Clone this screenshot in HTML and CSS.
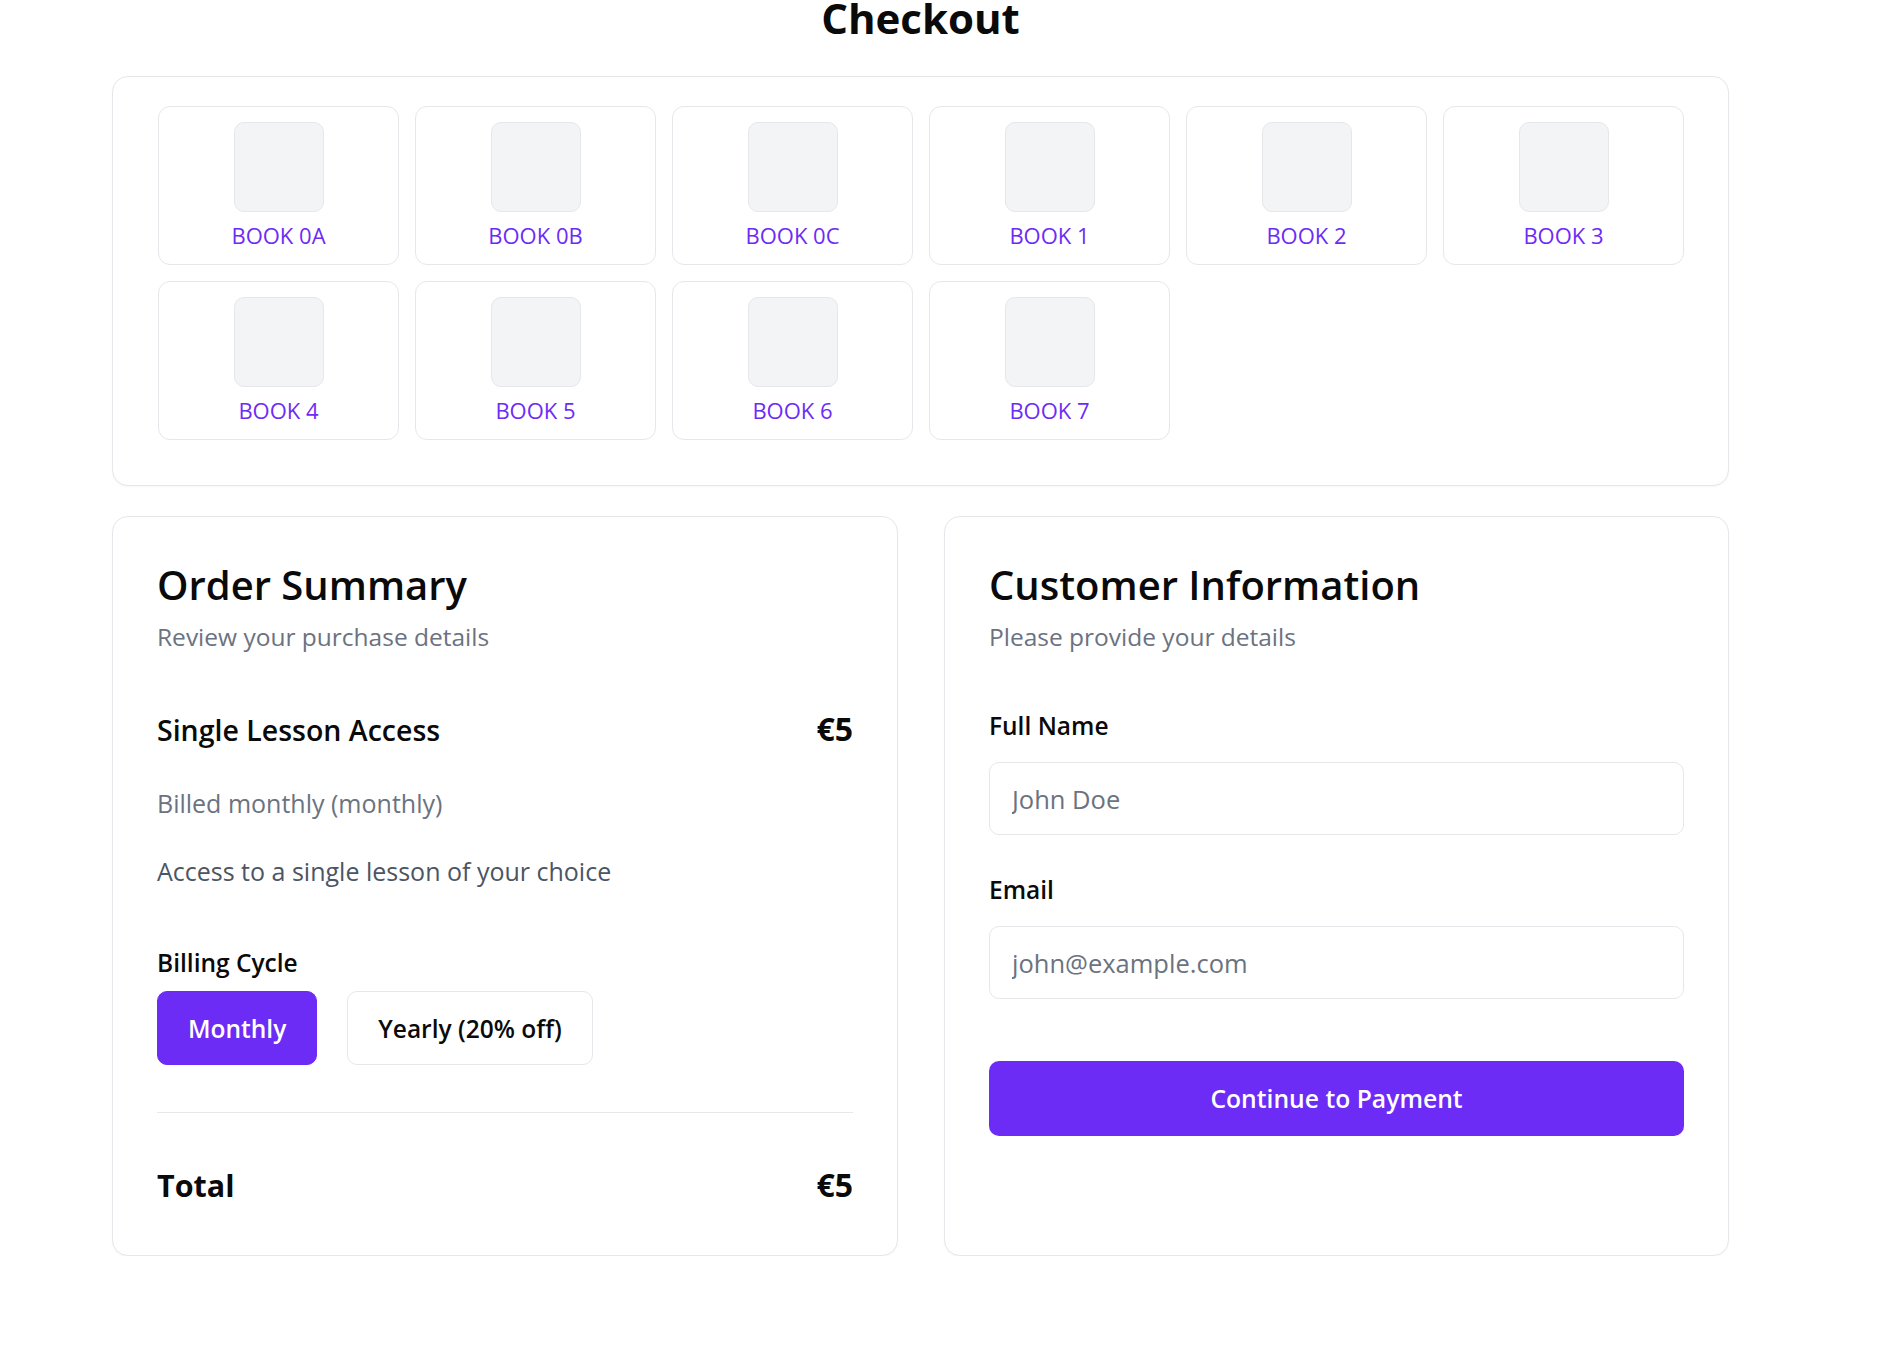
FILE: index.html
```html
<!DOCTYPE html>
<html lang="en">
<head>
<meta charset="utf-8">
<title>Checkout</title>
<link rel="stylesheet" href="styles.css">
</head>
<body>
<main class="page">
  <h1 class="title">Checkout</h1>

  <section class="card books">
    <div class="book-grid">
      <div class="book"><div class="cover"></div><span class="book-label">BOOK 0A</span></div>
      <div class="book"><div class="cover"></div><span class="book-label">BOOK 0B</span></div>
      <div class="book"><div class="cover"></div><span class="book-label">BOOK 0C</span></div>
      <div class="book"><div class="cover"></div><span class="book-label">BOOK 1</span></div>
      <div class="book"><div class="cover"></div><span class="book-label">BOOK 2</span></div>
      <div class="book"><div class="cover"></div><span class="book-label">BOOK 3</span></div>
      <div class="book"><div class="cover"></div><span class="book-label">BOOK 4</span></div>
      <div class="book"><div class="cover"></div><span class="book-label">BOOK 5</span></div>
      <div class="book"><div class="cover"></div><span class="book-label">BOOK 6</span></div>
      <div class="book"><div class="cover"></div><span class="book-label">BOOK 7</span></div>
    </div>
  </section>

  <div class="columns">
    <section class="card panel">
      <h2 class="panel-title">Order Summary</h2>
      <p class="panel-sub">Review your purchase details</p>

      <div class="item-row">
        <span class="item-name">Single Lesson Access</span>
        <span class="item-price">€5</span>
      </div>
      <p class="item-billed">Billed monthly (monthly)</p>
      <p class="item-desc">Access to a single lesson of your choice</p>

      <span class="field-label cycle-label">Billing Cycle</span>
      <div class="cycle-options">
        <button class="cycle-btn active" type="button">Monthly</button>
        <button class="cycle-btn" type="button">Yearly (20% off)</button>
      </div>

      <div class="divider"></div>

      <div class="total-row">
        <span>Total</span>
        <span class="total-price">€5</span>
      </div>
    </section>

    <section class="card panel">
      <h2 class="panel-title">Customer Information</h2>
      <p class="panel-sub">Please provide your details</p>

      <label class="field-label name-label" for="fullname">Full Name</label>
      <input class="text-input" id="fullname" type="text" placeholder="John Doe">

      <label class="field-label email-label" for="email">Email</label>
      <input class="text-input" id="email" type="email" placeholder="john@example.com">

      <button class="submit" type="button">Continue to Payment</button>
    </section>
  </div>
</main>
</body>
</html>
```

FILE: styles.css
```css
html, body {
  margin: 0;
  padding: 0;
  background: #ffffff;
}

body {
  font-family: "Open Sans", "Noto Sans", "Liberation Sans", sans-serif;
  color: #0a0a0a;
}

.page {
  width: 1617px;
  margin-left: 112px;
}

.title {
  margin: -6px 0 34px;
  font-size: 42px;
  line-height: 48px;
  font-weight: 700;
  text-align: center;
}

.card {
  background: #ffffff;
  border: 1px solid #e5e7eb;
  border-radius: 16px;
  box-shadow: 0 1px 2px rgba(0, 0, 0, 0.04);
}

.books {
  padding: 29px 44px 45px 45px;
}

.book-grid {
  display: grid;
  grid-template-columns: repeat(6, 1fr);
  gap: 16px;
}

.book {
  display: flex;
  flex-direction: column;
  align-items: center;
  padding: 15px 0 14px;
  border: 1px solid #e5e7eb;
  border-radius: 12px;
  background: #ffffff;
}

.cover {
  width: 90px;
  height: 90px;
  box-sizing: border-box;
  border: 1px solid #e5e7eb;
  border-radius: 10px;
  background: #f3f4f6;
}

.book-label {
  margin-top: 8px;
  font-size: 22px;
  line-height: 30px;
  font-weight: 500;
  color: #6d2bf6;
}

.columns {
  display: grid;
  grid-template-columns: 786px 785px;
  gap: 46px;
  margin-top: 30px;
}

.panel {
  padding: 44px 44px 50px;
}

.panel-title {
  margin: 1px 0 0;
  font-size: 40px;
  line-height: 46px;
  font-weight: 600;
}

.panel-sub {
  margin: 14px 0 0;
  font-size: 24.5px;
  line-height: 30px;
  color: #6b7280;
}

.item-row {
  display: flex;
  justify-content: space-between;
  align-items: baseline;
  margin-top: 59px;
}

.item-name {
  font-size: 28.5px;
  line-height: 36px;
  font-weight: 600;
}

.item-price {
  font-size: 32px;
  line-height: 36px;
  font-weight: 700;
}

.item-billed {
  margin: 40px 0 0;
  font-size: 25px;
  line-height: 30px;
  color: #6b7280;
}

.item-desc {
  margin: 38px 0 0;
  font-size: 25px;
  line-height: 30px;
  color: #4b5563;
}

.field-label {
  display: block;
  font-size: 24.5px;
  line-height: 32px;
  font-weight: 600;
  color: #0a0a0a;
}

.cycle-label {
  margin-top: 61px;
}

.cycle-options {
  display: flex;
  gap: 30px;
  margin-top: 12px;
}

.cycle-btn {
  height: 74px;
  padding: 0 30px;
  border: 1px solid #e5e7eb;
  border-radius: 10px;
  background: #ffffff;
  font-family: "Open Sans", "Noto Sans", sans-serif;
  font-size: 24.5px;
  font-weight: 600;
  color: #0a0a0a;
}

.cycle-btn.active {
  background: #6d2bf6;
  border-color: #6d2bf6;
  color: #ffffff;
}

.divider {
  margin-top: 47px;
  border-top: 1px solid #e5e7eb;
}

.total-row {
  display: flex;
  justify-content: space-between;
  align-items: baseline;
  margin-top: 52px;
  font-size: 30.5px;
  line-height: 40px;
  font-weight: 700;
}

.total-price {
  font-size: 32px;
}

.name-label {
  margin-top: 58px;
}

.email-label {
  margin-top: 39px;
}

.text-input {
  display: block;
  width: 100%;
  height: 73px;
  box-sizing: border-box;
  margin-top: 20px;
  padding: 0 22px;
  border: 1px solid #e5e7eb;
  border-radius: 10px;
  background: #ffffff;
  font-family: "Open Sans", "Noto Sans", sans-serif;
  font-size: 25.5px;
  color: #111111;
  outline: none;
}

.text-input::placeholder {
  color: #6b7280;
}

.submit {
  display: block;
  width: 100%;
  height: 75px;
  margin-top: 62px;
  border: 0;
  border-radius: 10px;
  background: #6d2bf6;
  font-family: "Open Sans", "Noto Sans", sans-serif;
  font-size: 24.7px;
  font-weight: 600;
  color: #ffffff;
}
```
